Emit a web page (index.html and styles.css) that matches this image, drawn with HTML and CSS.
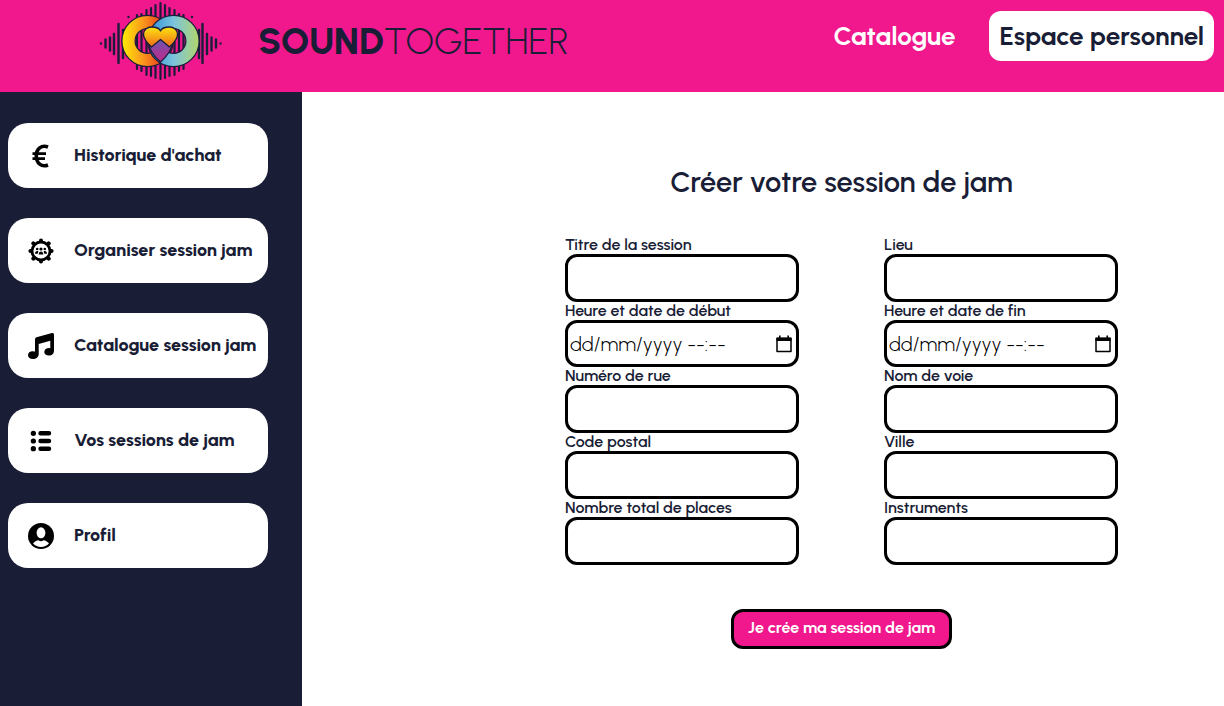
FILE: index.html
```html
<!DOCTYPE html>
<html lang="fr">
<head>
<meta charset="utf-8">
<meta name="viewport" content="width=device-width, initial-scale=1">
<title>SoundTogether</title>
<link rel="stylesheet" href="styles.css">
</head>
<body>
<header class="topbar">
  <a class="brand" href="#">
    <svg class="brand-logo" viewBox="0 0 124 84" aria-hidden="true">
      <defs>
        <linearGradient id="warm" gradientUnits="userSpaceOnUse" x1="23" y1="0" x2="74" y2="0"><stop offset="0.05" stop-color="#fde208"/><stop offset="0.4" stop-color="#fb9a1c"/><stop offset="0.8" stop-color="#e83a1c"/></linearGradient>
        <linearGradient id="cool" gradientUnits="userSpaceOnUse" x1="50" y1="0" x2="100" y2="0"><stop offset="0.1" stop-color="#3f9ad8"/><stop offset="0.5" stop-color="#7cc4dc"/><stop offset="1" stop-color="#b2d66a"/></linearGradient>
        <linearGradient id="heart" x1="0" y1="0" x2="0" y2="1"><stop offset="0" stop-color="#fde510"/><stop offset="1" stop-color="#ef6a1a"/></linearGradient>
        <linearGradient id="tip" x1="0" y1="0" x2="0" y2="1"><stop offset="0" stop-color="#5a5fb8"/><stop offset="0.6" stop-color="#a03a98"/><stop offset="1" stop-color="#c02a90"/></linearGradient>
      </defs>
      <g stroke="#1b1c3a" stroke-width="2.200" stroke-linecap="round">
        <path d="M2 43.500v.1M6.500 39.500v8M11 37.500v13M15 34v20M19.500 24v39M24 30v28M100 30v28M103.500 24v39M108 34v20M112.500 37.500v13M117 39.500v8M121.500 43.500v.1M29.500 17v.1M93 17v.1" stroke-width="2.400"/>
        <path d="M38 15v54M42.500 14v57M47.500 10v65M52 8v68M56.500 5v73M61.500 3v76M66 5v73M70.500 8v68M75.500 10v65M80 14v57M84.500 15v54"/>
      </g>
      <g fill="none" stroke="#1b1c3a">
        <circle cx="48.500" cy="41" r="19" stroke-width="14.500"/>
        <circle cx="48.500" cy="41" r="19" stroke="url(#warm)" stroke-width="12"/>
        <circle cx="74.500" cy="41" r="19" stroke-width="14.500"/>
        <circle cx="74.500" cy="41" r="19" stroke="url(#cool)" stroke-width="12"/>
      </g>
      <path d="M61.500 62C56 57 50 50 49.500 43L61.500 37 73.500 43C73 50 67 57 61.500 62Z" fill="url(#tip)" stroke="#1b1c3a" stroke-width="1.300"/>
      <path d="M49 43.500C46 40 44.500 38 44.500 34.500C44.500 30 48 27 52.500 27C57 27 60.500 28.500 61.500 31C62.500 28.500 66 27 70.500 27C75 27 78.500 30 78.500 34.500C78.500 38 77 40 74 43.500L70.500 47 61.500 39.500 52.500 47Z" fill="url(#heart)" stroke="#1b1c3a" stroke-width="1.300" stroke-linejoin="round"/>
    </svg>
    <span class="brand-name"><strong>SOUND</strong>TOGETHER</span>
  </a>
  <nav class="topnav">
    <a class="topnav-link" href="#">Catalogue</a>
    <a class="topnav-link topnav-link-active" href="#">Espace personnel</a>
  </nav>
</header>

<div class="layout">
  <nav class="sidebar" aria-label="Espace personnel">
    <a class="side-link" href="#">
      <svg class="side-icon" viewBox="0 0 28 28" fill="none" stroke="#000" stroke-width="3.600" aria-hidden="true"><path d="M21 5C14.500 2.500 9.300 7 9.300 14C9.300 21 14.500 25.500 21 23"/><path d="M5.500 11.600h13.500M5.500 16.600h12.500" stroke-width="2.600"/></svg>
      <span class="side-text">Historique d'achat</span></a>
    <a class="side-link" href="#">
      <svg class="side-icon" viewBox="0 0 28 28" aria-hidden="true">
        <circle cx="14" cy="14" r="9" fill="none" stroke="#000" stroke-width="2.800"/>
        <path d="M14 3.400v.1M14 24.500v.1M3.400 14h.1M24.500 14h.1M6.300 6.300l.1.100M21.600 6.300l.1.100M6.300 21.600l.1.100M21.600 21.600l.1.100" stroke="#000" stroke-width="4" stroke-linecap="round"/>
        <circle cx="14" cy="12" r="1.600"/><circle cx="10.200" cy="12" r="1.300"/><circle cx="17.800" cy="12" r="1.300"/>
        <path d="M11.700 17.500c0-4 4.600-4 4.600 0zM8 16.800c0-3 2.200-3.200 3.400-2.400l-.7 2.400zM20 16.800c0-3-2.200-3.200-3.400-2.400l.7 2.400z"/>
      </svg>
      <span class="side-text">Organiser session jam</span></a>
    <a class="side-link" href="#">
      <svg class="side-icon" viewBox="0 0 28 28" aria-hidden="true"><path d="M8 7.500Q8 5.800 9.500 5.300L25 1Q27 .6 27 2.500V18.500C27 21.500 25 23.500 22 23.500C19 23.500 17.300 22 17.300 20C17.300 17.500 19.500 16 22 16Q23 16 23.300 16.200V8.800L11.700 12V22C11.700 25 9 27 6 27C3 27 1 25.500 1 23.200C1 20.800 3 19.200 5.500 19.200Q7 19.200 8 19.500Z"/></svg>
      <span class="side-text">Catalogue session jam</span></a>
    <a class="side-link" href="#">
      <svg class="side-icon" viewBox="0 0 28 28" stroke="#000" stroke-linecap="round" aria-hidden="true"><path d="M6.300 6.300h.1M6.300 14h.1M6.300 21.700h.1" stroke-width="5.200"/><path d="M13.500 6.300h8.500M13.500 14h8.500M13.500 21.700h8.500" stroke-width="4.400"/></svg>
      <span class="side-text">Vos sessions de jam</span></a>
    <a class="side-link" href="#">
      <svg class="side-icon" viewBox="0 0 28 28" aria-hidden="true"><circle cx="14" cy="14" r="13"/><ellipse cx="14" cy="10.800" rx="4.400" ry="5.500" fill="#fff"/><path d="M6 21.500C7.500 19.500 9.500 18.500 11.500 18.200Q14 20.200 16.500 18.200C18.500 18.500 20.500 19.500 22 21.500A11 11 0 0 1 6 21.500Z" fill="#fff"/></svg>
      <span class="side-text">Profil</span></a>
  </nav>

  <main class="content">
    <h1 class="title">Créer votre session de jam</h1>
    <form class="jam-form">
      <div class="fields">
        <div class="field"><label for="titre">Titre de la session</label><input class="control" id="titre" type="text"></div>
        <div class="field"><label for="lieu">Lieu</label><input class="control" id="lieu" type="text"></div>
        <div class="field"><label for="debut">Heure et date de début</label>
          <div class="control control-date"><input class="date-input" id="debut" type="text" placeholder="dd/mm/yyyy --:--"><button class="date-button" type="button" aria-label="Choisir la date de début"><svg class="date-icon" viewBox="0 0 18 18" aria-hidden="true"><path d="M2 3.500h14v13H2z" fill="none" stroke="#000" stroke-width="1.500" stroke-linejoin="round"/><path d="M1.500 2.500h15V6h-15zM4 .5h1.600v3H4zM12.400.5H14v3h-1.600z"/></svg></button></div>
        </div>
        <div class="field"><label for="fin">Heure et date de fin</label>
          <div class="control control-date"><input class="date-input" id="fin" type="text" placeholder="dd/mm/yyyy --:--"><button class="date-button" type="button" aria-label="Choisir la date de fin"><svg class="date-icon" viewBox="0 0 18 18" aria-hidden="true"><path d="M2 3.500h14v13H2z" fill="none" stroke="#000" stroke-width="1.500" stroke-linejoin="round"/><path d="M1.500 2.500h15V6h-15zM4 .5h1.600v3H4zM12.400.5H14v3h-1.600z"/></svg></button></div>
        </div>
        <div class="field"><label for="numero">Numéro de rue</label><input class="control" id="numero" type="text"></div>
        <div class="field"><label for="voie">Nom de voie</label><input class="control" id="voie" type="text"></div>
        <div class="field"><label for="postal">Code postal</label><input class="control" id="postal" type="text"></div>
        <div class="field"><label for="ville">Ville</label><input class="control" id="ville" type="text"></div>
        <div class="field"><label for="places">Nombre total de places</label><input class="control" id="places" type="text"></div>
        <div class="field"><label for="instruments">Instruments</label><input class="control" id="instruments" type="text"></div>
      </div>
      <button class="submit" type="submit">Je crée ma session de jam</button>
    </form>
  </main>
</div>
</body>
</html>
```
FILE: styles.css
```css
* { box-sizing: border-box; }

body {
  margin: 0;
  min-height: 100vh;
  display: flex;
  flex-direction: column;
  background: #fff;
  color: #191d36;
  font-family: Urbanist, Lato, "Open Sans", sans-serif;
}

a { color: inherit; text-decoration: none; }

.topbar {
  display: flex;
  justify-content: space-between;
  align-items: flex-start;
  padding: 0 10px 8px 99px;
  background: #f0188c;
}

.brand { display: flex; align-items: center; gap: 35px; }
.brand-logo { width: 124px; height: 84px; }
.brand-name { padding-bottom: 2px; font-size: 37px; font-weight: 300; line-height: 46px; }
.brand-name strong { font-weight: 800; }

.topnav { display: flex; gap: 24px; padding-top: 11px; }
.topnav-link {
  padding: 0 10px;
  color: #fff;
  font-size: 26px;
  font-weight: 700;
  line-height: 50px;
}
.topnav-link-active { background: #fff; color: #191d36; border-radius: 12px; }

.layout { flex: 1; display: flex; }

.sidebar {
  flex: 0 0 302px;
  display: flex;
  flex-direction: column;
  gap: 30px;
  padding: 31px 34px 31px 8px;
  background: #191d36;
}
.side-link {
  display: flex;
  align-items: center;
  gap: 19px;
  min-height: 65px;
  padding-left: 19px;
  border-radius: 20px;
  background: #fff;
  font-size: 18px;
  font-weight: 800;
  white-space: nowrap;
}
.side-icon { flex: none; width: 28px; height: 28px; }
.side-text { padding-bottom: 2px; }

.content {
  flex: 1;
  display: flex;
  flex-direction: column;
  align-items: center;
  padding: 72px 0 32px 157px;
}
.title { margin: 0 0 36px; font-size: 29px; font-weight: 600; line-height: 36px; }

.jam-form { display: flex; flex-direction: column; align-items: center; gap: 44px; }
.fields { display: grid; grid-template-columns: 234px 234px; column-gap: 85px; }
.field { display: flex; flex-direction: column; font-size: 16px; font-weight: 600; line-height: 18px; }

.control {
  width: 100%;
  height: 48px;
  padding: 0 3px;
  border: 3px solid #000;
  border-radius: 12px;
  background: #fff;
  font: 300 20px Urbanist, Lato, sans-serif;
}
.control-date { display: flex; align-items: center; height: 47px; padding: 0 3px 0 2px; }
.date-input {
  flex: 1;
  min-width: 0;
  padding: 0;
  border: 0;
  background: none;
  font: inherit;
}
.date-input::placeholder { color: #000; }
.date-button { display: flex; padding: 0; border: 0; background: none; }
.date-icon { width: 18px; height: 18px; }

.submit {
  height: 40px;
  padding: 0 14px 3px;
  border: 3px solid #000;
  border-radius: 12px;
  background: #f0188c;
  color: #fff;
  font: 700 16px Urbanist, Lato, sans-serif;
}
```
